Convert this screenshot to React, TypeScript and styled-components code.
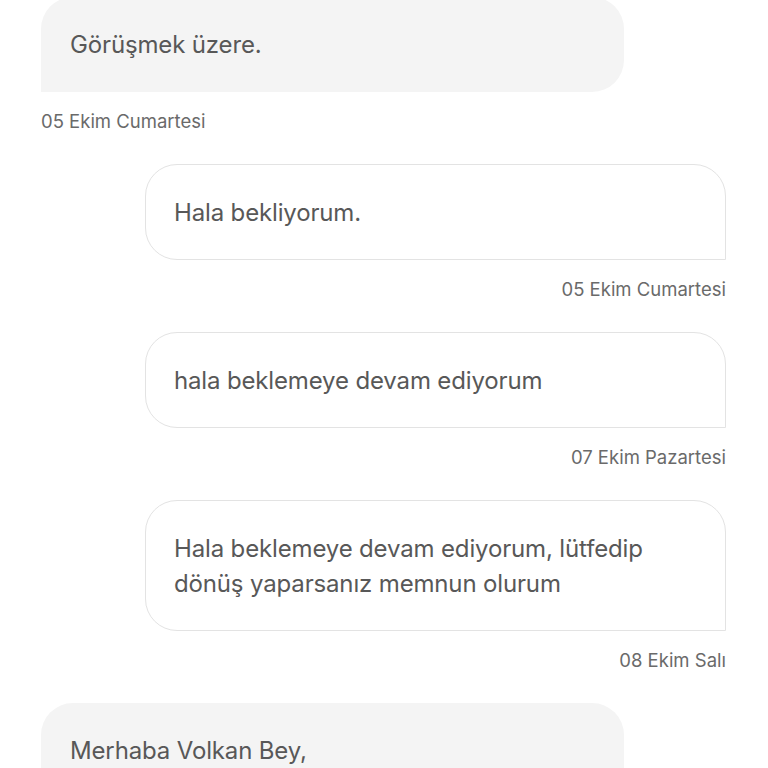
import styled, { createGlobalStyle } from "styled-components";

const GlobalStyle = createGlobalStyle`
  html, body {
    margin: 0;
    padding: 0;
    background: #ffffff;
    overflow: hidden;
  }
  body {
    font-family: Inter, "Noto Sans", "Liberation Sans", sans-serif;
  }
`;

const Thread = styled.div`
  display: flex;
  flex-direction: column;
  padding: 0 42px 0 41px;
  margin-top: -3px;
  height: 771px;
  overflow: hidden;
`;

const Group = styled.div<{ $mine?: boolean }>`
  display: flex;
  flex-direction: column;
  align-items: ${(p) => (p.$mine ? "flex-end" : "flex-start")};
  margin-bottom: 32px;
`;

const Bubble = styled.div<{ $mine?: boolean }>`
  box-sizing: border-box;
  width: ${(p) => (p.$mine ? "581px" : "583px")};
  padding: ${(p) => (p.$mine ? "29.5px 28px 29.5px 28px" : "30px 28px 30px 29px")};
  font-size: 24px;
  line-height: 35px;
  color: #585858;
  letter-spacing: -0.15px;
  background: ${(p) => (p.$mine ? "#ffffff" : "#f4f4f4")};
  border: ${(p) => (p.$mine ? "1px solid #e3e3e3" : "none")};
  border-radius: ${(p) => (p.$mine ? "32px 32px 0 32px" : "32px 32px 32px 0")};
`;

const Stamp = styled.div`
  margin-top: 19px;
  font-size: 18.5px;
  line-height: 21px;
  color: #6a6a6a;
`;

type Message = { mine: boolean; lines: string[]; date?: string };

const messages: Message[] = [
  { mine: false, lines: ["Görüşmek üzere."], date: "05 Ekim Cumartesi" },
  { mine: true, lines: ["Hala bekliyorum."], date: "05 Ekim Cumartesi" },
  { mine: true, lines: ["hala beklemeye devam ediyorum"], date: "07 Ekim Pazartesi" },
  {
    mine: true,
    lines: ["Hala beklemeye devam ediyorum, lütfedip", "dönüş yaparsanız memnun olurum"],
    date: "08 Ekim Salı",
  },
  { mine: false, lines: ["Merhaba Volkan Bey,"] },
];

export default function App() {
  return (
    <>
      <GlobalStyle />
      <Thread>
        {messages.map((m, i) => (
          <Group key={i} $mine={m.mine}>
            <Bubble $mine={m.mine}>
              {m.lines.map((l, j) => (
                <div key={j}>{l}</div>
              ))}
            </Bubble>
            {m.date && <Stamp>{m.date}</Stamp>}
          </Group>
        ))}
      </Thread>
    </>
  );
}
